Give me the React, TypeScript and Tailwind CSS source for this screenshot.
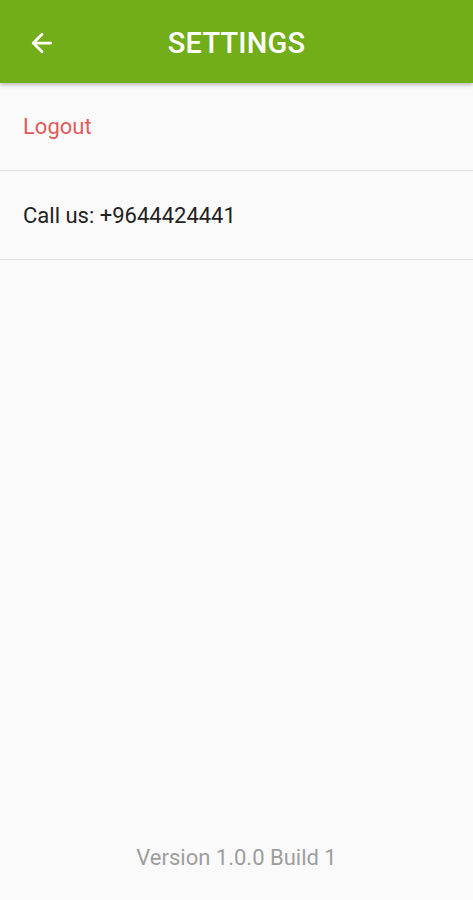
import { ArrowLeft } from 'lucide-react';

export default function App() {
  return (
    <div className="flex flex-col h-[900px] w-full bg-[#fafafa] font-['Roboto',sans-serif]">
      <header className="relative flex items-center justify-center h-[83px] bg-[#72ae19] shadow-[0_2px_4px_rgba(0,0,0,0.25)] z-10">
        <ArrowLeft className="absolute left-[27px] top-[28px] w-[30px] h-[30px] text-white" strokeWidth={2.2} />
        <h1 className="text-white text-[29px] font-medium tracking-[0.2px] mt-[4px]">SETTINGS</h1>
      </header>

      <div className="flex items-center h-[88px] px-[23px] border-b border-[#e0e0e0]">
        <span className="text-[#e25a5a] text-[22px]">Logout</span>
      </div>
      <div className="flex items-center h-[89px] px-[23px] border-b border-[#e0e0e0]">
        <span className="text-[#222222] text-[22px]">Call us: +9644424441</span>
      </div>

      <div className="flex-1" />

      <p className="text-center text-[#9e9e9e] text-[22px] pb-[26px]">Version 1.0.0 Build 1</p>
    </div>
  );
}
